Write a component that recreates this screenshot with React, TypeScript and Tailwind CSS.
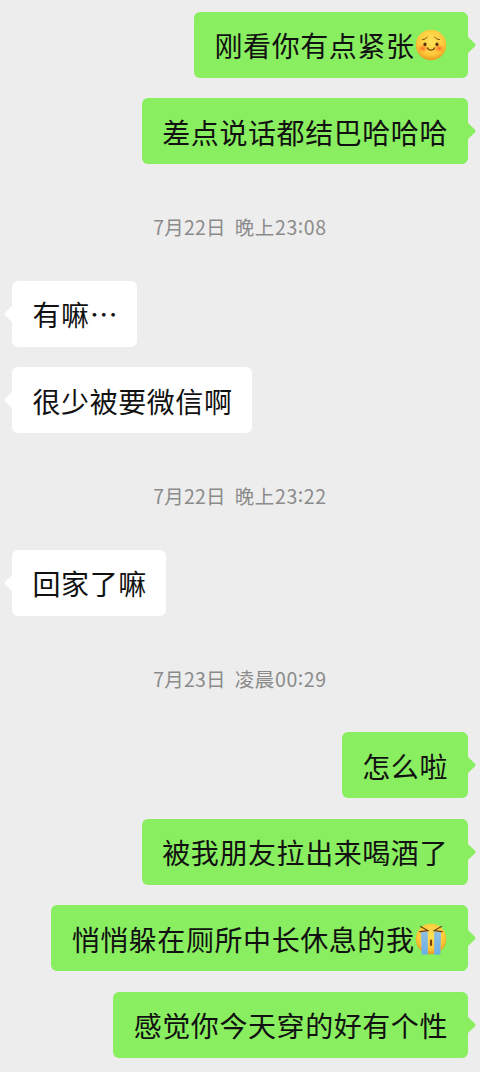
import React from 'react';

type Emoji = 'shy' | 'sob';

interface Message {
  kind: 'message';
  from: 'me' | 'them';
  text: string;
  emoji?: Emoji;
}

interface Timestamp {
  kind: 'time';
  day: string;
  hour: string;
  minute: string;
}

const thread: (Message | Timestamp)[] = [
  { kind: 'message', from: 'me', text: '刚看你有点紧张', emoji: 'shy' },
  { kind: 'message', from: 'me', text: '差点说话都结巴哈哈哈' },
  { kind: 'time', day: '7月22日', hour: '晚上23', minute: '08' },
  { kind: 'message', from: 'them', text: '有嘛…' },
  { kind: 'message', from: 'them', text: '很少被要微信啊' },
  { kind: 'time', day: '7月22日', hour: '晚上23', minute: '22' },
  { kind: 'message', from: 'them', text: '回家了嘛' },
  { kind: 'time', day: '7月23日', hour: '凌晨00', minute: '29' },
  { kind: 'message', from: 'me', text: '怎么啦' },
  { kind: 'message', from: 'me', text: '被我朋友拉出来喝酒了' },
  { kind: 'message', from: 'me', text: '悄悄躲在厕所中长休息的我', emoji: 'sob' },
  { kind: 'message', from: 'me', text: '感觉你今天穿的好有个性' },
];

const ShyFace = () => (
  <svg viewBox="0 0 32 32" className="h-8 w-8 shrink-0">
    <defs>
      <radialGradient id="shy-skin" cx="50%" cy="38%" r="62%">
        <stop offset="0" stopColor="#ffe257" />
        <stop offset="0.7" stopColor="#ffc93b" />
        <stop offset="1" stopColor="#e9991c" />
      </radialGradient>
      <radialGradient id="shy-blush">
        <stop offset="0" stopColor="#ff5f24" stopOpacity="0.9" />
        <stop offset="1" stopColor="#ff7a2b" stopOpacity="0" />
      </radialGradient>
    </defs>
    <circle cx="16" cy="16" r="15.2" fill="url(#shy-skin)" />
    <ellipse cx="7.8" cy="19.4" rx="5.4" ry="4" fill="url(#shy-blush)" />
    <ellipse cx="24.2" cy="19.4" rx="5.4" ry="4" fill="url(#shy-blush)" />
    <g fill="none" stroke="#7b4a12" strokeLinecap="round">
      <path d="M7.4 10.6c2 0 3.8-.9 4.8-2.5M24.6 10.6c-2 0-3.8-.9-4.8-2.5" strokeWidth="1" />
      <path d="M12.4 18.8c.6 1.9 2.1 2.3 3.6 2.3s3-.4 3.6-2.3" strokeWidth="1.2" />
    </g>
    <ellipse cx="10" cy="15.3" rx="1.6" ry="1.9" fill="#5d3410" />
    <ellipse cx="22" cy="15.3" rx="1.6" ry="1.9" fill="#5d3410" />
  </svg>
);

const SobFace = () => (
  <svg viewBox="0 0 32 32" className="h-8 w-8 shrink-0">
    <defs>
      <radialGradient id="sob-skin" cx="50%" cy="38%" r="62%">
        <stop offset="0" stopColor="#ffe257" />
        <stop offset="0.7" stopColor="#ffc93b" />
        <stop offset="1" stopColor="#e9991c" />
      </radialGradient>
      <linearGradient id="sob-tears" x1="0" y1="0" x2="0" y2="1">
        <stop offset="0" stopColor="#8fbfdf" />
        <stop offset="1" stopColor="#68aeea" />
      </linearGradient>
    </defs>
    <circle cx="16" cy="16" r="15.2" fill="url(#sob-skin)" />
    <path d="M6 8.600h6.800V31.600c-2.400.5-4.800.3-6.200-.6zM19.200 8.600H26l-.6 22.400c-1.400.9-3.800 1.100-6.200.6z" fill="url(#sob-tears)" />
    <g fill="none" stroke="#6b3d0e" strokeLinecap="round" strokeWidth="1.2">
      <path d="M5.6 3.4l7.2 4.2-8 1M26.4 3.4l-7.2 4.2 8 1" />
    </g>
    <rect x="14.9" y="16.6" width="2.2" height="6.4" rx="1.1" fill="#7d3f12" />
  </svg>
);

const Bubble = ({ message }: { message: Message }) => {
  const mine = message.from === 'me';

  return (
    <div className={`flex px-3 ${mine ? 'justify-end' : 'justify-start'}`}>
      <div
        className={`relative flex h-[66px] items-center rounded-md pt-px pl-[20.5px] text-[28px] leading-none tracking-[0.57px] text-[#111] ${
          mine ? 'bg-[#89ee60]' : 'bg-white'
        } ${message.emoji ? 'pr-[21.5px]' : mine ? 'pr-5' : 'pr-[19px]'}`}
      >
        <span className="whitespace-nowrap">{message.text}</span>
        {message.emoji && (message.emoji === 'shy' ? <ShyFace /> : <SobFace />)}
        {/* Bubble tail */}
        <svg
          viewBox="0 0 9 18"
          className={`absolute top-6 h-[18px] w-[9px] ${
            mine ? '-right-2 text-[#89ee60]' : '-left-2 rotate-180 text-white'
          }`}
        >
          <path d="M0 0l8 7.8q1 1.2 0 2.4L0 18z" fill="currentColor" />
        </svg>
      </div>
    </div>
  );
};

const TimeLabel = ({ time }: { time: Timestamp }) => (
  <div className="my-[9px] flex h-[57.5px] items-center justify-center gap-[9px] pt-[9px] text-[19.5px] leading-none whitespace-nowrap text-[#8b8b8b]">
    <span className="tracking-[0.2px]">{time.day}</span>
    <span className="tracking-[0.6px]">
      {time.hour}
      <span className="relative -top-0.5">:</span>
      {time.minute}
    </span>
  </div>
);

export default function App() {
  return (
    <main className="flex h-[1072px] w-[480px] flex-col gap-[20.5px] overflow-hidden bg-[#ededed] pt-[11.6px] font-['Noto_Sans_CJK_SC',sans-serif]">
      {thread.map((item, i) =>
        item.kind === 'time' ? <TimeLabel key={i} time={item} /> : <Bubble key={i} message={item} />
      )}
    </main>
  );
}
